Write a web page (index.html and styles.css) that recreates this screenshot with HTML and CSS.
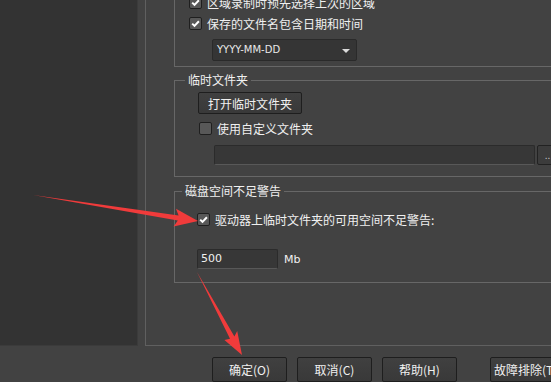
FILE: index.html
```html
<!DOCTYPE html>
<html lang="zh-CN">
<head>
  <meta charset="UTF-8">
  <title>输出 - 临时文件夹设置</title>
  <link rel="stylesheet" href="styles.css">
</head>

<body>
  <div class="window">
    <aside class="sidebar"></aside>

    <section class="panel">
      <div class="group group-top">
        <label class="check-row"><span class="check on"><svg viewBox="0 0 11 11"><path d="M2.2 5.6 L4.5 7.9 L8.9 3.2"/></svg></span>区域录制时预先选择上次的区域</label>
        <label class="check-row"><span class="check on"><svg viewBox="0 0 11 11"><path d="M2.2 5.6 L4.5 7.9 L8.9 3.2"/></svg></span>保存的文件名包含日期和时间</label>
        <div class="select">YYYY-MM-DD<span class="caret"></span></div>
      </div>

      <div class="group group-temp">
        <div class="group-title">临时文件夹</div>
        <button class="btn btn-open">打开临时文件夹</button>
        <label class="check-row"><span class="check"></span>使用自定义文件夹</label>
        <div class="path-row">
          <div class="field path"></div>
          <button class="btn-browse">...</button>
        </div>
      </div>

      <div class="group group-disk">
        <div class="group-title">磁盘空间不足警告</div>
        <label class="check-row"><span class="check on"><svg viewBox="0 0 11 11"><path d="M2.2 5.6 L4.5 7.9 L8.9 3.2"/></svg></span>驱动器上临时文件夹的可用空间不足警告:</label>
        <div class="size-row">
          <div class="field size">500</div>
          <span class="unit">Mb</span>
        </div>
      </div>
    </section>
  </div>

  <div class="footer">
    <button class="btn">确定(O)</button>
    <button class="btn">取消(C)</button>
    <button class="btn">帮助(H)</button>
    <button class="btn btn-trouble">故障排除(T)...</button>
  </div>

  <!-- 标注箭头 -->
  <svg class="arrows" viewBox="0 0 551 382" width="551" height="382">
    <polygon points="33,195 178.6,215.4 176,208.8 198,221 173.6,226.6 177.8,220.4"/>
    <polygon points="197,272 234.4,336.4 237.2,331 242,355 224.4,340 230,338.8"/>
  </svg>
</body>

</html>
```

FILE: styles.css
```css
* {
  margin: 0;
  padding: 0;
  box-sizing: border-box;
}

html,
body {
  width: 551px;
  height: 382px;
  overflow: hidden;
}

body {
  position: relative;
  background: #424242;
  color: #f0f0f0;
  font-family: "Noto Sans CJK SC", "Microsoft YaHei", sans-serif;
  font-size: 12px;
}

.window {
  display: flex;
  height: 346px;
}

.sidebar {
  flex-shrink: 0;
  width: 138px;
  height: 346px;
  background: #333333;
  border-right: 1px solid #3b3b3b;
  border-bottom: 1px solid #3b3b3b;
}

.panel {
  flex-shrink: 0;
  width: 420px;
  height: 346px;
  margin-left: 7px;
  border-left: 1px solid #606060;
  border-bottom: 1px solid #606060;
}

/* 分组框 */
.group {
  width: 600px;
  margin-left: 28px;
  padding-left: 22px;
  border: 1px solid #676767;
}

.group-title {
  display: table;
  margin: -9px 0 0 -12px;
  padding: 0 3px;
  line-height: 16px;
  background: #424242;
}

.group-top {
  margin-top: -9px;
  padding-left: 14px;
  padding-bottom: 5px;
}

.group-temp {
  margin-top: 13px;
  padding-bottom: 11px;
}

.group-disk {
  margin-top: 14px;
  padding-bottom: 13px;
}

.group-disk .group-title {
  margin-left: -15px;
}

/* 复选框 */
.check-row {
  display: flex;
  align-items: center;
  gap: 5px;
  height: 21px;
  line-height: 21px;
  white-space: nowrap;
}

.check {
  flex-shrink: 0;
  width: 13px;
  height: 13px;
  border: 1px solid #1f1f1f;
  border-radius: 2px;
  background: #585858;
  display: flex;
  align-items: center;
  justify-content: center;
}

.check svg {
  width: 11px;
  height: 11px;
}

.check svg path {
  fill: none;
  stroke: #ffffff;
  stroke-width: 2;
}

.select {
  position: relative;
  width: 145px;
  height: 22px;
  margin: 5px 0 0 23px;
  padding-left: 4px;
  line-height: 20px;
  font-family: "DejaVu Sans", sans-serif;
  font-size: 10px;
  color: #e8e8e8;
  background: #353535;
  border: 1px solid #2a2a2a;
  border-radius: 2px;
}

.caret {
  position: absolute;
  right: 6px;
  top: 9px;
  border-left: 4px solid transparent;
  border-right: 4px solid transparent;
  border-top: 4px solid #dcdcdc;
}

/* 按钮 */
.btn {
  flex-shrink: 0;
  width: 75px;
  height: 25px;
  font-family: inherit;
  font-size: 12px;
  color: #f0f0f0;
  background: linear-gradient(#404040, #393939);
  border: 1px solid #1e1e1e;
  border-radius: 2px;
}

.btn-open {
  display: block;
  width: 104px;
  height: 22px;
  margin: 4px 0 0 1px;
}

.group-temp .check-row {
  margin: 4px 0 0 2px;
}

.path-row {
  display: flex;
  gap: 2px;
  margin: 6px 0 0 17px;
}

.field {
  flex-shrink: 0;
  height: 20px;
  background: #373737;
  border: 1px solid #2b2b2b;
  border-bottom-color: #585858;
  border-radius: 2px;
}

.path {
  width: 321px;
}

.btn-browse {
  flex-shrink: 0;
  width: 24px;
  height: 20px;
  color: #c8c8c8;
  font-size: 10px;
  background: #3c3c3c;
  border: 1px solid #222222;
  border-radius: 2px;
}

.group-disk .check-row {
  margin-top: 10px;
}

.size-row {
  display: flex;
  align-items: center;
  gap: 6px;
  margin-top: 19px;
  font-family: "DejaVu Sans", sans-serif;
  font-size: 11px;
}

.size {
  width: 81px;
  padding-left: 3px;
  line-height: 18px;
}

/* 底部按钮 */
.footer {
  display: flex;
  gap: 10px;
  margin-top: 11px;
  padding-left: 212px;
}

.btn-trouble {
  width: 90px;
  margin-left: 23px;
  text-align: left;
  padding-left: 3px;
  white-space: nowrap;
}

.arrows {
  position: absolute;
  left: 0;
  top: 0;
  pointer-events: none;
}

.arrows polygon {
  fill: #f03b3b;
}
```
